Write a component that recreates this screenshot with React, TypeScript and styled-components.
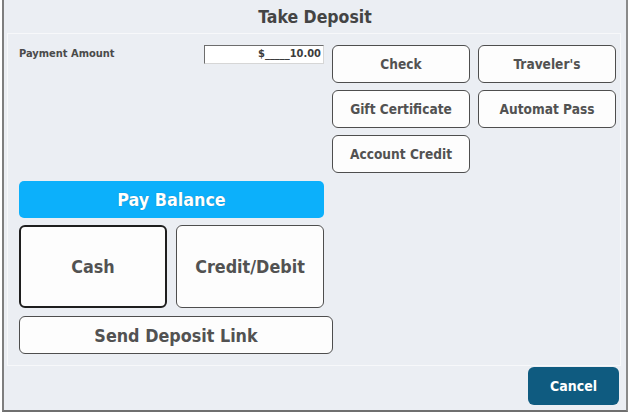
import React, { useState } from 'react';
import styled, { createGlobalStyle } from 'styled-components';

const OTHER_METHODS = ['Check', "Traveler's", 'Gift Certificate', 'Automat Pass', 'Account Credit'];

const FONT = '"DejaVu Sans Condensed", "DejaVu Sans", Verdana, sans-serif';

const GlobalStyle = createGlobalStyle`
  html, body {
    margin: 0;
    padding: 0;
    background: #ffffff;
  }
  body {
    font-family: ${FONT};
    font-stretch: condensed;
  }
`;

export default function App() {
  const [selected, setSelected] = useState('Cash');

  return (
    <>
      <GlobalStyle />
      <Window>
        <Title>Take Deposit</Title>
        <Panel>
          <AmountRow>
            <AmountLabel>Payment Amount</AmountLabel>
            <AmountBox>$_____10.00</AmountBox>
          </AmountRow>
          <MethodGrid>
            {OTHER_METHODS.map((name) => (
              <MethodButton key={name}>{name}</MethodButton>
            ))}
          </MethodGrid>
          <PayBalance>Pay Balance</PayBalance>
          <Spacer />
          <TenderRow>
            {['Cash', 'Credit/Debit'].map((name) => (
              <TenderButton
                key={name}
                $selected={selected === name}
                onClick={() => setSelected(name)}
              >
                {name}
              </TenderButton>
            ))}
          </TenderRow>
          <Spacer />
          <LinkButton>Send Deposit Link</LinkButton>
        </Panel>
        <Footer>
          <CancelButton>Cancel</CancelButton>
        </Footer>
      </Window>
    </>
  );
}

const Window = styled.div`
  display: flex;
  flex-direction: column;
  margin-left: 2px;
  width: 622px;
  height: 410px;
  background: #ebeef3;
  border-left: 2px solid #7e7e7e;
  border-right: 2px solid #8a8a8a;
  border-bottom: 2px solid #6f6f6f;
  color: #4a4a4a;
`;

const Title = styled.div`
  height: 33px;
  display: flex;
  align-items: center;
  justify-content: center;
  font-size: 17.5px;
  font-weight: 700;
  color: #444;
  padding-top: 1px;
  box-sizing: border-box;
`;

const Panel = styled.div`
  display: grid;
  grid-template-columns: 305px 284px;
  grid-template-rows: 129px 37px 83px 39px;
  column-gap: 8px;
  row-gap: 7px;
  margin: 0 5px 0 3px;
  height: 333px;
  box-sizing: border-box;
  padding: 11px 0 0 11px;
  border: 1px solid #f7f8fa;
`;

const AmountRow = styled.div`
  display: flex;
  align-items: flex-start;
  justify-content: space-between;
`;

const AmountLabel = styled.div`
  font-size: 11px;
  font-weight: 700;
  color: #4a4a4a;
  padding-top: 2px;
`;

const AmountBox = styled.div`
  width: 120px;
  height: 19px;
  box-sizing: border-box;
  background: #fff;
  border-top: 1px solid #6d6d6d;
  border-left: 1px solid #6d6d6d;
  border-right: 1px solid #d6d6d6;
  border-bottom: 1px solid #d6d6d6;
  font-size: 11px;
  font-weight: 700;
  color: #3c3c3c;
  text-align: right;
  padding: 1px 2px 0 0;
`;

const MethodGrid = styled.div`
  display: grid;
  grid-template-columns: 138px 138px;
  grid-auto-rows: 38px;
  column-gap: 8px;
  row-gap: 7px;
`;

const BaseButton = styled.button`
  font-family: ${FONT};
  font-stretch: condensed;
  font-weight: 700;
  background: #fdfdfd;
  color: #525252;
  border: 1px solid #4e4e4e;
  border-radius: 6px;
  padding: 0;
  cursor: pointer;
  box-sizing: border-box;
`;

const MethodButton = styled(BaseButton)`
  font-size: 13.6px;
`;

const PayBalance = styled(BaseButton)`
  border: none;
  background: #0cb0fb;
  color: #fff;
  font-size: 17.8px;
  border-radius: 5px;
  text-shadow: 0 0 1px rgba(0, 0, 0, 0.35);
`;

const Spacer = styled.div``;

const TenderRow = styled.div`
  display: grid;
  grid-template-columns: 148px 148px;
  column-gap: 9px;
`;

const TenderButton = styled(BaseButton)<{ $selected: boolean }>`
  font-size: 17.8px;
  border: ${({ $selected }) => ($selected ? '2px solid #1e1e1e' : '1px solid #4e4e4e')};
`;

const LinkButton = styled(BaseButton)`
  width: 314px;
  margin-top: 1px;
  font-size: 17.8px;
`;

const Footer = styled.div`
  display: flex;
  justify-content: flex-end;
  padding: 1px 7px 0 0;
`;

const CancelButton = styled.button`
  width: 91px;
  height: 38px;
  font-family: ${FONT};
  font-stretch: condensed;
  font-size: 14px;
  font-weight: 700;
  color: #fff;
  background: #0f5b80;
  border: none;
  border-radius: 6px;
  cursor: pointer;
`;
